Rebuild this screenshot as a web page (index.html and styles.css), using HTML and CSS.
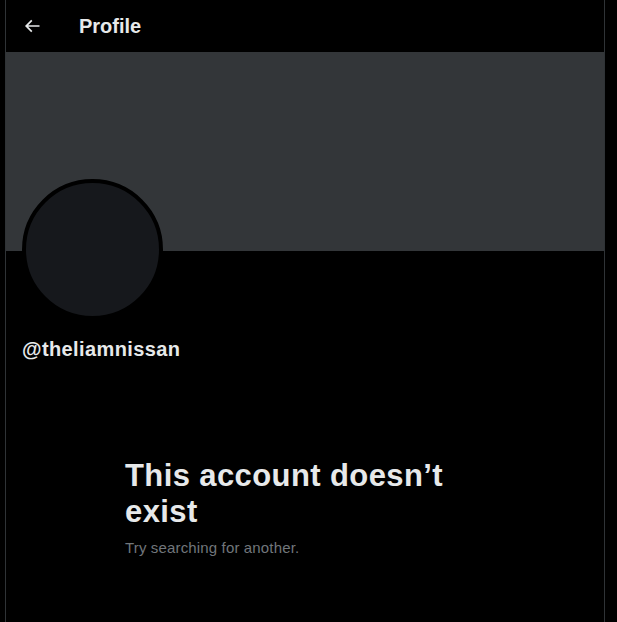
FILE: index.html
```html
<!DOCTYPE html>
<html lang="en">
<head>
<meta charset="utf-8">
<title>Profile</title>
<link rel="stylesheet" href="styles.css">
</head>
<body>
<main class="column">
  <header class="topbar">
    <svg class="back" viewBox="0 0 24 24" aria-hidden="true"><path d="M7.414 13l5.043 5.04-1.414 1.42L3.586 12l7.457-7.46 1.414 1.42L7.414 11H21v2H7.414z"/></svg>
    <h2 class="title">Profile</h2>
  </header>
  <div class="banner"></div>
  <section class="profile">
    <div class="avatar"></div>
    <div class="handle">@theliamnissan</div>
  </section>
  <section class="empty">
    <h1 class="empty-title">This account doesn’t exist</h1>
    <p class="empty-sub">Try searching for another.</p>
  </section>
</main>
</body>
</html>
```

FILE: styles.css
```css
* { box-sizing: border-box; }
html, body { margin: 0; padding: 0; background: #000; }
body {
  font-family: "Liberation Sans", Arial, sans-serif;
  color: #e7e9ea;
  padding-left: 5px;
}
.column {
  width: 600px;
  min-height: 100vh;
  border-left: 1px solid #2f3336;
  border-right: 1px solid #2f3336;
  display: flex;
  flex-direction: column;
}
.topbar {
  height: 52px;
  display: flex;
  align-items: center;
  padding: 0 16px;
  gap: 37px;
}
.back {
  width: 20px;
  height: 20px;
  fill: #e7e9ea;
  flex: none;
}
.title {
  margin: 0;
  font-size: 20px;
  line-height: 24px;
  font-weight: 700;
}
.banner {
  height: 199px;
  background: #333639;
}
.profile {
  padding: 12px 16px 0;
}
.avatar {
  width: 141px;
  height: 141px;
  margin-top: -84px;
  border-radius: 50%;
  border: 4px solid #000;
  background: #16181c;
}
.handle {
  margin-top: 17px;
  font-size: 20px;
  line-height: 24px;
  font-weight: 700;
  letter-spacing: 0.4px;
  color: #e7e9ea;
}
.empty {
  width: 400px;
  margin: 97px auto 0;
  padding: 0 20px;
}
.empty-title {
  margin: 0;
  font-size: 31px;
  line-height: 36px;
  font-weight: 700;
  letter-spacing: 0.4px;
}
.empty-sub {
  margin: 8px 0 0;
  font-size: 15px;
  line-height: 20px;
  letter-spacing: 0.15px;
  color: #71767b;
}
```
